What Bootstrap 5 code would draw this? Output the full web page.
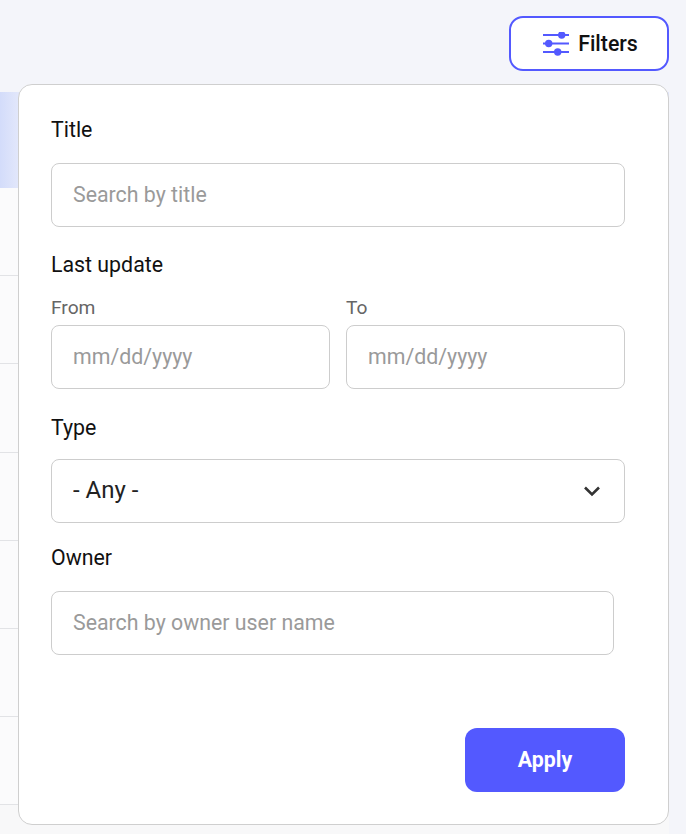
<!DOCTYPE html>
<html lang="en">
<head>
    <meta charset="UTF-8">
    <meta name="viewport" content="width=device-width, initial-scale=1.0">
    <title>Filters</title>
    <link href="https://cdn.jsdelivr.net/npm/bootstrap@5.3.0/dist/css/bootstrap.min.css" rel="stylesheet">
    <style>
        html, body { height: 834px; overflow: hidden; }
        body { background: #f4f5fa; font-family: Roboto, sans-serif; color: #111; position: relative; }
        .top-bar { height: 92px; padding: 16px 17px 0 0; }
        .filters-btn { width: 160px; height: 55px; padding: 1px 0 0 2px; border: 2px solid #5359ff; border-radius: 14px; background: #fff; color: #111; font-size: 21.33px; font-weight: 500; }
        .filters-btn:hover { background: #fff; color: #111; border-color: #5359ff; }
        .bg-rows { width: 669px; height: 742px; background: #f8f8f9; }
        .bg-head { height: 96px; background: linear-gradient(90deg, #d3dcfa, #e2e7fb 18px); }
        .bg-row { height: 88.2px; background: #fbfbfc; border-bottom: 1px solid #e2e3e6; }
        .filter-panel { position: absolute; left: 18px; top: 84px; width: 651px; height: 741px; background: #fff; border: 1px solid #cfcfcf; border-radius: 14px; padding: 31px 43px 32px 32px; }
        .field-label { font-size: 21.33px; line-height: 28px; margin-bottom: 19px; color: #111; }
        .sub-label { font-size: 19.2px; line-height: 24px; margin-bottom: 5px; color: #666; }
        .filter-panel .form-control, .filter-panel .form-select { height: 64px; border: 1px solid #cdcdcd; border-radius: 8px; padding: 0 21px 2px; font-size: 21.33px; color: #222; }
        .filter-panel .form-control::placeholder { color: #9a9a9a; opacity: 1; }
        .filter-panel .form-select { font-size: 24px; background-image: url("data:image/svg+xml,%3csvg xmlns='http://www.w3.org/2000/svg' viewBox='0 0 16 11'%3e%3cpath fill='none' stroke='%23333' stroke-width='2.6' d='M1 1.5l7 7 7-7'/%3e%3c/svg%3e"); background-size: 16px 11px; background-position: right 24px center; }
        .owner-input { width: 563px; }
        .date-row { column-gap: 16px; }
        .last-update { margin-top: 24px; margin-bottom: 17px; }
        .type-label { margin-top: 25px; margin-bottom: 17px; }
        .owner-label { margin-top: 21px; margin-bottom: 19px; }
        .apply-btn { width: 160px; height: 64px; background: #5359ff; border: 0; border-radius: 12px; font-size: 21.33px; font-weight: 700; color: #fff; }
        .apply-btn:hover { background: #5359ff; color: #fff; }
    </style>
</head>
<body>
<div class="top-bar d-flex justify-content-end">
    <button type="button" class="btn filters-btn d-flex align-items-center justify-content-center gap-2">
        <svg width="28" height="24" viewBox="0 0 28 24" fill="none" stroke="#5359ff" stroke-width="2">
            <path d="M1 3H27M1 11.5H27M1 20H27"/>
            <circle cx="19.7" cy="3" r="3.7" fill="#5359ff" stroke="none"/>
            <circle cx="6.7" cy="11.5" r="3.7" fill="#5359ff" stroke="none"/>
            <circle cx="15.7" cy="20" r="3.7" fill="#5359ff" stroke="none"/>
        </svg>
        Filters
    </button>
</div>
<div class="bg-rows">
    <div class="bg-head"></div>
    <div class="bg-row"></div>
    <div class="bg-row"></div>
    <div class="bg-row"></div>
    <div class="bg-row"></div>
    <div class="bg-row"></div>
    <div class="bg-row"></div>
    <div class="bg-row"></div>
</div>
<form class="filter-panel d-flex flex-column">
    <div class="field-label">Title</div>
    <input type="text" class="form-control" placeholder="Search by title">
    <div class="field-label last-update">Last update</div>
    <div class="d-flex date-row">
        <div class="flex-fill">
            <div class="sub-label">From</div>
            <input type="text" class="form-control" placeholder="mm/dd/yyyy">
        </div>
        <div class="flex-fill">
            <div class="sub-label">To</div>
            <input type="text" class="form-control" placeholder="mm/dd/yyyy">
        </div>
    </div>
    <div class="field-label type-label">Type</div>
    <select class="form-select">
        <option>- Any -</option>
    </select>
    <div class="field-label owner-label">Owner</div>
    <input type="text" class="form-control owner-input" placeholder="Search by owner user name">
    <div class="d-flex justify-content-end mt-auto">
        <button type="button" class="btn apply-btn">Apply</button>
    </div>
</form>
<script src="https://cdn.jsdelivr.net/npm/bootstrap@5.3.0/dist/js/bootstrap.bundle.min.js"></script>
</body>
</html>
